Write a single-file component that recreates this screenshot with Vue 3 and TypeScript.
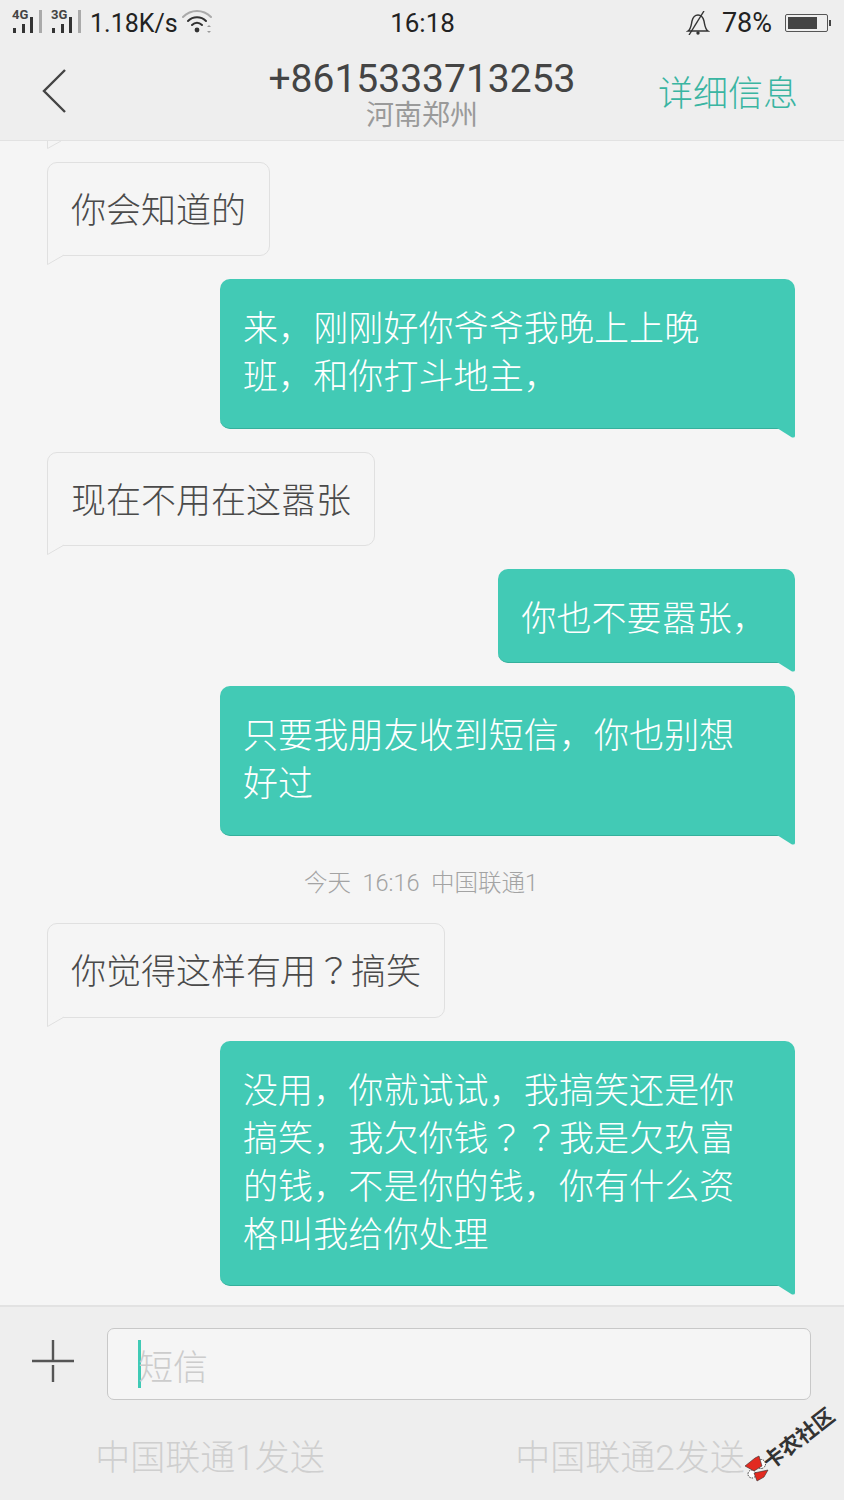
<template>
  <div class="screen">
    <header class="top">
      <div class="status">
        <div class="status-left">
          <div v-for="sim in sims" :key="sim" class="signal">
            <span class="net">{{ sim }}</span>
            <svg width="30" height="23" viewBox="0 0 30 23">
              <rect x="0" y="18" width="3" height="5" fill="#333" />
              <rect x="9" y="14" width="3" height="9" fill="#333" />
              <rect x="17" y="7" width="3" height="16" fill="#333" />
              <rect x="26" y="0" width="3" height="23" fill="#aaa" />
            </svg>
          </div>
          <span class="speed">1.18K/s</span>
          <svg class="wifi" width="30" height="24" viewBox="0 0 30 24" fill="none" stroke-linecap="round">
            <path d="M1 7C9 -1 21 -1 29 7" stroke="#aaa" stroke-width="2" />
            <path d="M6 11C11 6 19 6 24 11" stroke="#333" stroke-width="2" />
            <path d="M10 15C13 12 17 12 20 15" stroke="#333" stroke-width="2" />
            <circle cx="15" cy="20" r="2.4" fill="#333" />
            <path d="M25 17l2-2 2 2zM25 21l2 2 2-2z" fill="#999" />
          </svg>
        </div>
        <span class="time">16:18</span>
        <div class="status-right">
          <svg width="24" height="24" viewBox="0 0 24 24" fill="none" stroke="#333" stroke-width="1.4">
            <path d="M2 20c3-2 3-5 4-10c1-4 3-6 6-6c3 0 5 2 6 6c1 5 1 8 4 10z" />
            <path d="M3 24L18 0" />
            <circle cx="12" cy="22" r="1" fill="#333" />
          </svg>
          <span class="battery-text">78%</span>
          <div class="battery">
            <div class="battery-fill" :style="{ width: batteryLevel + '%' }"></div>
          </div>
        </div>
      </div>
      <div class="nav">
        <svg class="back" width="24" height="44" viewBox="0 0 24 44" fill="none" stroke="#444" stroke-width="2.4">
          <path d="M23 1L2 22L23 43" />
        </svg>
        <div class="contact">
          <div class="number">+8615333713253</div>
          <div class="place">河南郑州</div>
        </div>
        <span class="detail">详细信息</span>
      </div>
    </header>

    <main class="list">
      <svg class="cut-tail" width="16" height="8" viewBox="0 0 16 8">
        <path d="M0.5 0V7.5L14 0" fill="#f5f5f5" stroke="#e0e0e0" />
      </svg>
      <template v-for="(msg, i) in messages" :key="i">
        <div v-if="msg.stamp" class="stamp">{{ msg.stamp }}</div>
        <div v-else class="bubble" :class="[msg.sent ? 'sent' : 'recv', { single: msg.single }]">
          <template v-for="(part, j) in splitMarks(msg.text)" :key="j">
            <span v-if="part === '？'" class="mark">？</span>
            <template v-else>{{ part }}</template>
          </template>
          <svg v-if="msg.sent" class="tail" width="18" height="11" viewBox="0 0 18 11">
            <path d="M0 0H18V8Q18 10 15 9.500z" fill="#42cab5" />
          </svg>
          <svg v-else class="tail" width="18" height="12" viewBox="0 0 18 12">
            <path d="M0.5 0V10.500L17 1" fill="#f5f5f5" stroke="#e0e0e0" />
          </svg>
        </div>
      </template>
    </main>

    <footer class="bottom">
      <div class="compose">
        <svg class="plus" width="42" height="42" viewBox="0 0 42 42" stroke="#555" stroke-width="2.400">
          <path d="M0 21H42M21 0V21M21 25V42" />
        </svg>
        <div class="input">
          <span class="cursor"></span>
          <span class="placeholder">短信</span>
        </div>
      </div>
      <div class="send-row">
        <span class="send">中国联通1发送</span>
        <span class="send">中国联通2发送</span>
      </div>
    </footer>

    <div class="watermark">
      <svg class="bow" width="30" height="30" viewBox="0 0 30 30">
        <circle cx="18" cy="11" r="4.500" fill="#fff" stroke="#333" stroke-dasharray="1.500 1" />
        <circle cx="9" cy="21" r="4" fill="#fff" stroke="#333" stroke-dasharray="1.500 1" />
        <path d="M2 13L12 5L16 3L19 13L11 18z" fill="#e22a20" stroke="#333" stroke-width="0.600" />
        <path d="M11 20L25 17L21 24L14 28z" fill="#e22a20" stroke="#333" stroke-width="0.600" />
      </svg>
      <span class="mark-text">卡农社区</span>
    </div>
  </div>
</template>

<script setup lang="ts">
interface Message {
  text?: string
  sent?: boolean
  single?: boolean
  stamp?: string
}

const sims = ['4G', '3G']
const batteryLevel = 78

const messages: Message[] = [
  { text: '你会知道的', single: true },
  { text: '来，刚刚好你爷爷我晚上上晚班，和你打斗地主，', sent: true },
  { text: '现在不用在这嚣张', single: true },
  { text: '你也不要嚣张，', sent: true, single: true },
  { text: '只要我朋友收到短信，你也别想好过', sent: true },
  { stamp: '今天  16:16  中国联通1' },
  { text: '你觉得这样有用？搞笑', single: true },
  {
    text: '没用，你就试试，我搞笑还是你搞笑，我欠你钱？？我是欠玖富的钱，不是你的钱，你有什么资格叫我给你处理',
    sent: true,
  },
]

// the phone font centres the question mark, the SC face does not
const splitMarks = (text = '') => text.split(/(？)/).filter(Boolean)
</script>

<style>
html,
body {
  margin: 0;
  background: #f5f5f5;
}
</style>

<style scoped>
.screen {
  position: relative;
  width: 844px;
  height: 1500px;
  display: flex;
  flex-direction: column;
  overflow: hidden;
  background: #f5f5f5;
  font-family: Roboto, "Noto Sans CJK SC", sans-serif;
}

.top {
  height: 141px;
  box-sizing: border-box;
  background: #eeeeee;
  border-bottom: 1px solid #e2e2e2;
}

.status {
  height: 46px;
  display: grid;
  grid-template-columns: 1fr auto 1fr;
  align-items: center;
  padding: 0 12px 0 13px;
  color: #222;
  font-size: 26px;
}

.status-left {
  display: flex;
  align-items: center;
  gap: 9px;
}

.signal {
  position: relative;
  width: 30px;
  height: 23px;
  margin-top: -4px;
}

.signal svg {
  display: block;
}

.net {
  position: absolute;
  left: -1px;
  top: -1px;
  font-size: 13px;
  font-weight: 700;
  color: #444;
  line-height: 11px;
}

.speed {
  margin-left: -1px;
  font-size: 25px;
}

.wifi {
  margin: -2px 0 0 -5px;
}

.status-right {
  display: flex;
  justify-content: flex-end;
  align-items: center;
}

.battery-text {
  margin: 0 13px 0 12px;
  font-size: 27px;
}

.battery {
  position: relative;
  width: 43px;
  height: 18px;
  padding: 2px;
  box-sizing: border-box;
  border: 1px solid #555;
  border-radius: 2px;
  margin-right: 4px;
}

.battery::after {
  content: "";
  position: absolute;
  right: -4px;
  top: 5px;
  width: 2px;
  height: 6px;
  background: #444;
}

.battery-fill {
  height: 100%;
  background: #444;
}

.nav {
  height: 94px;
  display: grid;
  grid-template-columns: 1fr auto 1fr;
  align-items: center;
  padding: 0 47px;
}

.back {
  display: block;
  margin: -4px 0 0 -5px;
}

.contact {
  text-align: center;
  margin-top: 2px;
}

.number {
  font-size: 39px;
  line-height: 44px;
  color: #444;
}

.place {
  font-size: 28px;
  line-height: 30px;
  color: #9a9a9a;
}

.detail {
  justify-self: end;
  margin: -6px -1px 0 0;
  font-size: 35px;
  font-weight: 300;
  color: #3ab5a2;
}

.list {
  flex: 1;
  min-height: 0;
  display: flex;
  flex-direction: column;
  gap: 23px;
  padding: 0 49px 0 47px;
  overflow: hidden;
  font-size: 35px;
  font-weight: 300;
  line-height: 48px;
}

.cut-tail {
  display: block;
  flex: none;
  margin-bottom: -10px;
}

.bubble {
  position: relative;
  flex: none;
  box-sizing: border-box;
  width: fit-content;
  max-width: 575px;
  border-radius: 10px;
}

.mark {
  font-family: "Noto Sans CJK TC", sans-serif;
  line-height: 1;
}

.recv {
  align-self: flex-start;
  padding: 25px 23px 19px;
  color: #4a4a4a;
  border: 1px solid #e0e0e0;
  border-bottom-left-radius: 0;
}

.stamp + .recv {
  padding-bottom: 20px;
}

.sent {
  align-self: flex-end;
  padding: 27px 28px 26px 23px;
  color: #fff;
  letter-spacing: 0.1px;
  background: #42cab5;
  border-bottom: 1px solid #35b09c;
  border-bottom-right-radius: 0;
}

.sent.single {
  padding-bottom: 18px;
}

.sent:last-child {
  padding-bottom: 25px;
}

.tail {
  position: absolute;
  display: block;
  top: 100%;
}

.recv .tail {
  left: -1px;
  margin-top: -1px;
}

.sent .tail {
  right: 0;
}

.stamp {
  flex: none;
  margin-bottom: -7px;
  text-align: center;
  font-size: 23.500px;
  font-weight: 300;
  line-height: 48px;
  color: #a3a3a3;
  white-space: pre;
}

.bottom {
  height: 195px;
  box-sizing: border-box;
  background: #eeeeee;
  border-top: 2px solid #e2e2e2;
}

.compose {
  display: flex;
  align-items: center;
  gap: 33px;
  padding: 21px 33px 0 32px;
}

.plus {
  flex: none;
  margin-top: -6px;
}

.input {
  flex: 1;
  height: 72px;
  box-sizing: border-box;
  display: flex;
  align-items: center;
  padding-left: 30px;
  background: #f5f5f5;
  border: 1px solid #c8c8c8;
  border-radius: 7px;
}

.cursor {
  flex: none;
  width: 2.500px;
  height: 48px;
  margin-right: -2.500px;
  background: #3fcab5;
}

.placeholder {
  font-size: 35px;
  font-weight: 300;
  color: #cccccc;
}

.send-row {
  display: flex;
  margin-top: 34px;
  padding-right: 4px;
}

.send {
  flex: 1;
  text-align: center;
  font-size: 35px;
  font-weight: 300;
  line-height: 50px;
  color: #cfcfcf;
}

.watermark {
  position: absolute;
  left: 743px;
  top: 1404px;
  width: 101px;
  height: 80px;
}

.bow {
  position: absolute;
  left: 0;
  top: 49px;
}

.mark-text {
  position: absolute;
  left: 14px;
  top: 23px;
  font-size: 21px;
  line-height: 24px;
  font-weight: 700;
  color: #333;
  white-space: nowrap;
  transform: rotate(-38deg);
}
</style>
